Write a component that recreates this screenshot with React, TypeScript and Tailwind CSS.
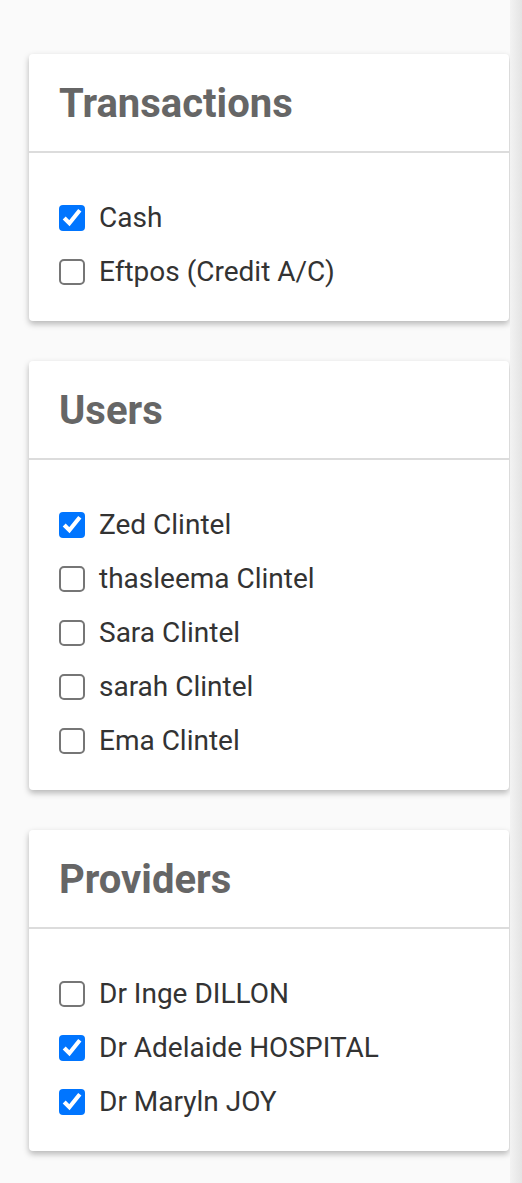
import React from 'react';

type Item = { label: string; checked: boolean };

const sections: { title: string; items: Item[] }[] = [
  {
    title: 'Transactions',
    items: [
      { label: 'Cash', checked: true },
      { label: 'Eftpos (Credit A/C)', checked: false },
    ],
  },
  {
    title: 'Users',
    items: [
      { label: 'Zed Clintel', checked: true },
      { label: 'thasleema Clintel', checked: false },
      { label: 'Sara Clintel', checked: false },
      { label: 'sarah Clintel', checked: false },
      { label: 'Ema Clintel', checked: false },
    ],
  },
  {
    title: 'Providers',
    items: [
      { label: 'Dr Inge DILLON', checked: false },
      { label: 'Dr Adelaide HOSPITAL', checked: true },
      { label: 'Dr Maryln JOY', checked: true },
    ],
  },
];

const FilterCard: React.FC<{ title: string; items: Item[] }> = ({ title, items }) => (
  <div className="w-[480px] rounded-[4px] bg-white shadow-[0_3px_6px_rgba(0,0,0,0.28)]">
    <div className="border-b-2 border-[#dcdcdc] px-[30px] pt-[27px] pb-[24px]">
      <h2 className="text-[40px] font-bold leading-[46px] text-[#666666]">{title}</h2>
    </div>
    <div className="px-[30px] pt-[38px] pb-[22px]">
      {items.map((item) => (
        <label key={item.label} className="flex h-[54px] items-center gap-[14px]">
          {/* native checkbox scaled up like a zoomed page */}
          <input
            type="checkbox"
            defaultChecked={item.checked}
            className="m-0 h-[13px] w-[13px] shrink-0 accent-[#0075ff] [zoom:2]"
          />
          <span className="text-[28px] leading-[54px] text-[#333333]">{item.label}</span>
        </label>
      ))}
    </div>
  </div>
);

export default function App() {
  return (
    <div className="flex min-h-[1183px] bg-[#fafafa] font-['Roboto',sans-serif]">
      <div className="flex flex-1 flex-col gap-[40px] pt-[54px] pl-[29px]">
        {sections.map((s) => (
          <FilterCard key={s.title} title={s.title} items={s.items} />
        ))}
      </div>
      <div className="w-[12px] bg-gradient-to-r from-[#f3f3f3] to-[#e4e4e4]" />
    </div>
  );
}
